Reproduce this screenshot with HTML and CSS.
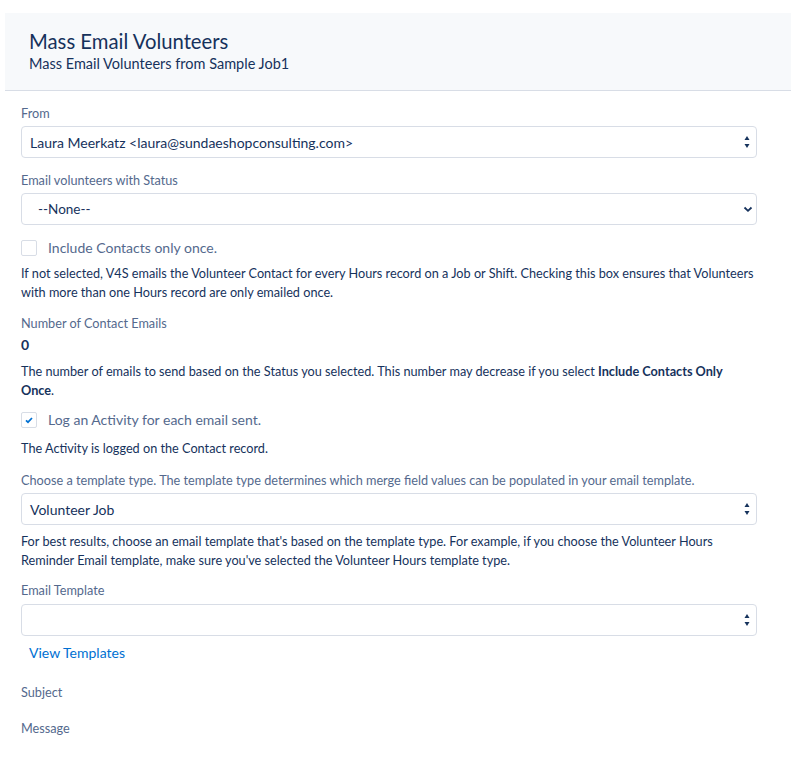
FILE: index.html
```html
<!DOCTYPE html>
<html lang="en">
<head>
<meta charset="utf-8">
<title>Mass Email Volunteers</title>
<link rel="stylesheet" href="styles.css">
</head>
<body>
<div class="page">
  <header class="page-header">
    <h1 class="title">Mass Email Volunteers</h1>
    <p class="subtitle">Mass Email Volunteers from Sample Job1</p>
  </header>
  <main class="form">
    <div class="field">
      <div class="label">From</div>
      <div class="select">
        <span class="select-text">Laura Meerkatz &lt;laura@sundaeshopconsulting.com&gt;</span>
        <svg class="spin" width="8" height="14" viewBox="0 0 8 14"><polygon points="1.5,5 4,1 6.5,5" fill="#16325c"/><polygon points="1.5,9 6.5,9 4,13" fill="#16325c"/></svg>
      </div>
    </div>
    <div class="field">
      <div class="label">Email volunteers with Status</div>
      <div class="select">
        <span class="select-text none">--None--</span>
        <svg class="chev" width="10" height="8" viewBox="0 0 10 8"><polyline points="1.5,2.5 5,5.8 8.5,2.5" fill="none" stroke="#16325c" stroke-width="1.8"/></svg>
      </div>
    </div>
    <div class="check-row first-check">
      <span class="box"></span>
      <span class="check-label">Include Contacts only once.</span>
    </div>
    <p class="help first-help">If not selected, V4S emails the Volunteer Contact for every Hours record on a Job or Shift. Checking this box ensures that Volunteers with more than one Hours record are only emailed once.</p>
    <div class="label count-label">Number of Contact Emails</div>
    <div class="count">0</div>
    <p class="help count-help">The number of emails to send based on the Status you selected. This number may decrease if you select <b>Include Contacts Only</b> <b>Once</b>.</p>
    <div class="check-row second-check">
      <span class="box checked"><svg width="10" height="8" viewBox="0 0 10 8"><polyline points="2,4.3 4,6.2 8,2" fill="none" stroke="#0070d2" stroke-width="1.7"/></svg></span>
      <span class="check-label">Log an Activity for each email sent.</span>
    </div>
    <p class="help activity-help">The Activity is logged on the Contact record.</p>
    <div class="field type-field">
      <div class="label type-label">Choose a template type. The template type determines which merge field values can be populated in your email template.</div>
      <div class="select">
        <span class="select-text">Volunteer Job</span>
        <svg class="spin" width="8" height="14" viewBox="0 0 8 14"><polygon points="1.5,5 4,1 6.5,5" fill="#16325c"/><polygon points="1.5,9 6.5,9 4,13" fill="#16325c"/></svg>
      </div>
    </div>
    <p class="help type-help">For best results, choose an email template that's based on the template type. For example, if you choose the Volunteer Hours Reminder Email template, make sure you've selected the Volunteer Hours template type.</p>
    <div class="field template-field">
      <div class="label template-label">Email Template</div>
      <div class="select">
        <span class="select-text"></span>
        <svg class="spin" width="8" height="14" viewBox="0 0 8 14"><polygon points="1.5,5 4,1 6.5,5" fill="#16325c"/><polygon points="1.5,9 6.5,9 4,13" fill="#16325c"/></svg>
      </div>
    </div>
    <a class="link" href="#">View Templates</a>
    <div class="label plain subject">Subject</div>
    <div class="label plain message">Message</div>
  </main>
</div>
</body>
</html>
```

FILE: styles.css
```css
* { box-sizing: border-box; }
html, body { margin: 0; padding: 0; background: #ffffff; }
body {
  font-family: Lato, "Open Sans", sans-serif;
  color: #16325c;
  font-size: 13px;
  line-height: 1.5;
}
.page { padding: 13px 0 40px 5px; }
.page-header {
  background: #f7f9fb;
  border-bottom: 1px solid #d8dde6;
  height: 78px;
  padding: 16px 24px 0 24px;
}
.title {
  margin: 0;
  font-weight: 400;
  font-size: 20.3px;
  line-height: 24px;
  color: #16325c;
}
.subtitle {
  margin: 2px 0 0 0;
  font-size: 14.5px;
  line-height: 18px;
}
.form { padding: 13px 34px 0 16px; }
.field { display: flex; flex-direction: column; }
.field + .field { margin-top: 13px; }
.label {
  font-size: 12.7px;
  line-height: 18px;
  color: #54698d;
  margin-bottom: 4px;
}
.select {
  height: 32px;
  border: 1px solid #d8dde6;
  border-radius: 4px;
  display: flex;
  align-items: center;
  justify-content: space-between;
  padding: 0 5px 0 8px;
  background: #fff;
}
.select-text { font-size: 14px; color: #16325c; }
.select-text.none { padding-left: 8px; font-size: 13.5px; }
.chev { margin-right: -2px; }
.check-row {
  display: flex;
  align-items: center;
  height: 21px;
}
.first-check { margin-top: 12px; }
.second-check { margin-top: 9px; }
.box {
  width: 16px;
  height: 16px;
  border: 1px solid #d8dde6;
  border-radius: 2px;
  display: flex;
  align-items: center;
  justify-content: center;
  margin-right: 11px;
  flex: none;
}
.check-label { font-size: 14px; color: #54698d; }
.help { margin: 0; font-size: 12.7px; line-height: 19px; }
.first-help { margin-top: 6px; }
.count-label { margin-top: 12px; margin-bottom: 3px; }
.count { font-weight: 700; font-size: 14px; line-height: 20px; }
.count-help { margin-top: 7px; }
.activity-help { margin-top: 9px; }
.type-field { margin-top: 13px; }
.type-label { font-size: 12.7px; line-height: 19px; margin-bottom: 3px; }
.type-help { margin-top: 7px; }
.template-field { margin-top: 11px; }
.template-label { margin-bottom: 5px; }
.link {
  display: block;
  margin-top: 6px;
  padding-left: 8px;
  font-size: 14px;
  line-height: 21px;
  color: #0070d2;
  text-decoration: none;
}
.plain { margin-bottom: 0; }
.subject { margin-top: 20px; }
.message { margin-top: 18px; }
```
